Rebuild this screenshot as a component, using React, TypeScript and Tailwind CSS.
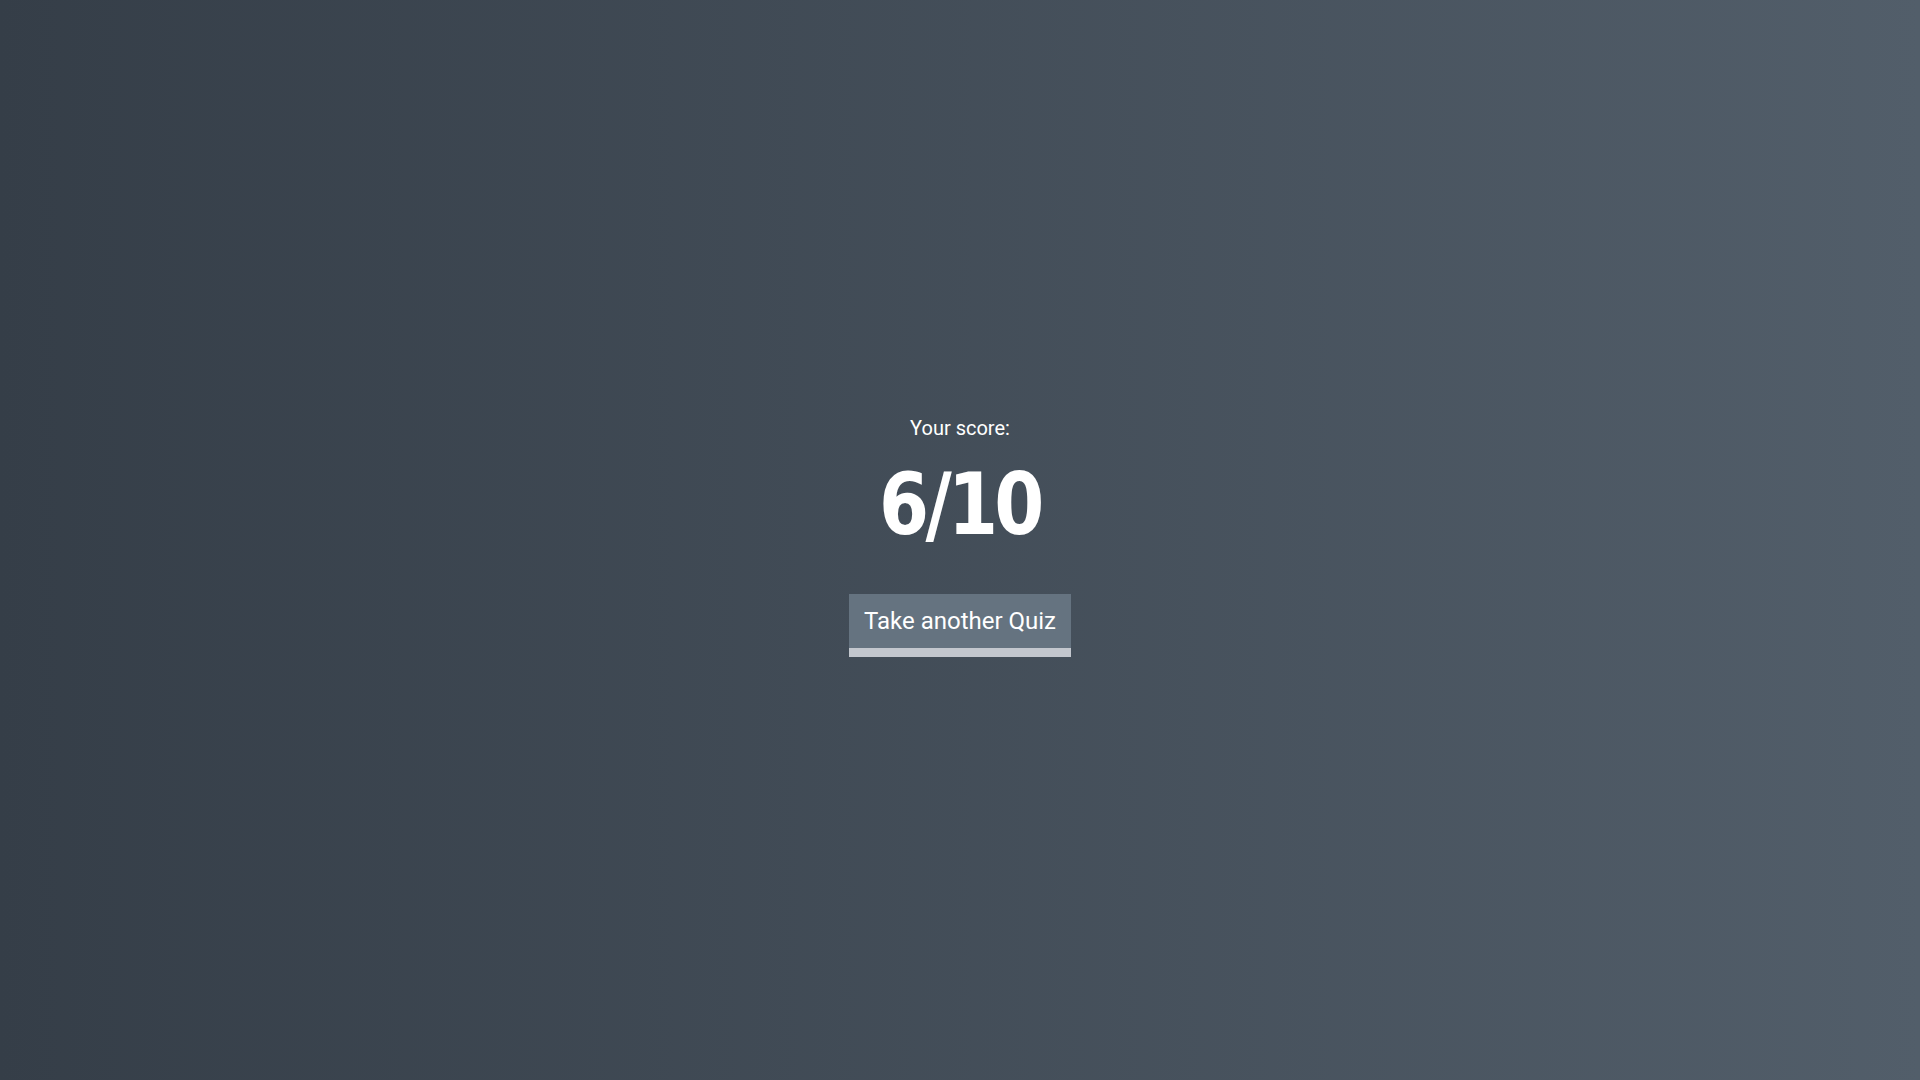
export default function App() {
  return (
    <div className="w-full h-screen bg-gradient-to-r from-[#353e48] to-[#525e6a] flex flex-col items-center justify-center text-white font-['Roboto','Liberation_Sans',sans-serif]">
      <div className="flex flex-col items-center -mt-[6px]">
        <p className="text-[20px] leading-none">Your score:</p>
        <h1 className="mt-[23px] text-[86px] leading-none font-bold tracking-[-4px] scale-x-[0.93] font-['DejaVu_Sans_Condensed','DejaVu_Sans',sans-serif] [font-stretch:condensed]">
          6/10
        </h1>
        <button className="mt-[47px] w-[222px] h-[63px] bg-[#657380] border-b-[9px] border-[#c3c7ce] text-[24px] text-white">
          Take another Quiz
        </button>
      </div>
    </div>
  );
}
